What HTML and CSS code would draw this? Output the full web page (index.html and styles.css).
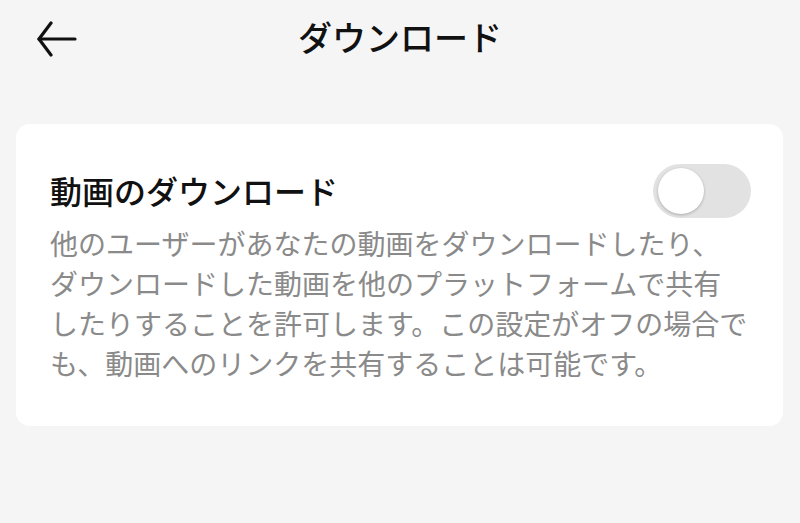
FILE: index.html
```html
<!DOCTYPE html>
<html lang="ja">
<head>
    <meta charset="UTF-8">
    <meta name="viewport" content="width=device-width, initial-scale=1.0">
    <title>ダウンロード</title>
    <link rel="stylesheet" href="styles.css">
</head>
<body>

    <header class="top-bar">
        <button class="back-button" aria-label="戻る">
            <svg width="44" height="40" viewBox="0 0 44 40">
                <path d="M40 18H4" fill="none" stroke="#111" stroke-width="3.2" stroke-linecap="round"/>
                <path d="M16 2L4 18L16 34" fill="none" stroke="#111" stroke-width="3.2" stroke-linecap="round" stroke-linejoin="round"/>
            </svg>
        </button>
        <h1 class="page-title">ダウンロード</h1>
    </header>

    <section class="setting-card">
        <div class="setting-row">
            <h2 class="setting-title">動画のダウンロード</h2>
            <div class="toggle">
                <span class="toggle-knob"></span>
            </div>
        </div>
        <p class="setting-desc">他のユーザーがあなたの動画をダウンロードしたり、<br>ダウンロードした動画を他のプラットフォームで共有<br>したりすることを許可します。この設定がオフの場合で<br>も、動画へのリンクを共有することは可能です。</p>
    </section>

</body>
</html>
```

FILE: styles.css
```css
body {
    margin: 0;
    background-color: #f5f5f5;
    font-family: "Noto Sans CJK JP", "Noto Sans", sans-serif;
    color: #111;
}

.top-bar {
    position: relative;
    height: 78px;
    display: flex;
    align-items: center;
    justify-content: center;
}

.back-button {
    position: absolute;
    left: 35px;
    top: 21px;
    padding: 0;
    border: none;
    background: none;
    display: flex;
}

.page-title {
    margin: 0;
    font-size: 34px;
    font-weight: 500;
    line-height: 1;
    margin-top: -4px;
}

.setting-card {
    margin: 46px 17px 0 16px;
    background-color: #fff;
    border-radius: 14px;
    padding: 40px 32px 43px 34px;
}

.setting-row {
    display: flex;
    align-items: center;
    justify-content: space-between;
}

.setting-title {
    margin: 0;
    font-size: 32px;
    font-weight: 500;
    line-height: 1.3;
}

.toggle {
    width: 98px;
    height: 54px;
    border-radius: 27px;
    background-color: #e2e2e2;
    display: flex;
    align-items: center;
    padding-left: 5px;
    box-sizing: border-box;
}

.toggle-knob {
    width: 46px;
    height: 46px;
    border-radius: 50%;
    background-color: #fff;
    box-shadow: 0 1px 3px rgba(0, 0, 0, 0.25);
}

.setting-desc {
    margin: 5px 0 0 0;
    font-size: 28px;
    line-height: 40px;
    color: #8a8a8a;
    white-space: nowrap;
}
```
